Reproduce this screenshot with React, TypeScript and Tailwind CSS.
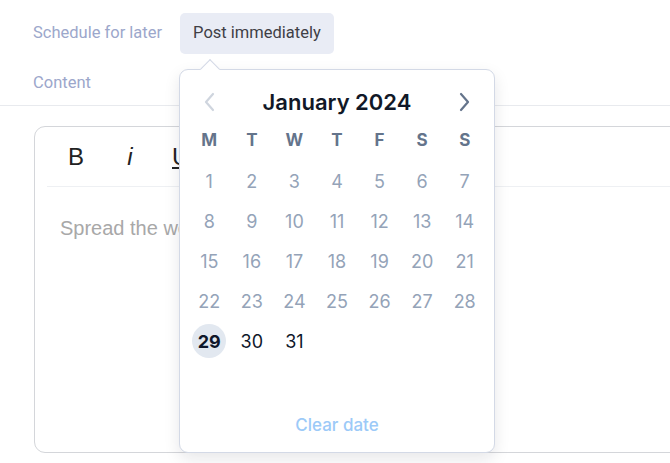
import React from "react";

const weeks: (number | null)[][] = [
  [1, 2, 3, 4, 5, 6, 7],
  [8, 9, 10, 11, 12, 13, 14],
  [15, 16, 17, 18, 19, 20, 21],
  [22, 23, 24, 25, 26, 27, 28],
  [29, 30, 31, null, null, null, null],
];

function Chevron({ dir, className }: { dir: "left" | "right"; className: string }) {
  return (
    <svg width="14" height="22" viewBox="0 0 14 22" fill="none" className={className}>
      {dir === "left" ? (
        <path d="M11 3 L4 11 L11 19" stroke="currentColor" strokeWidth="2.2" strokeLinecap="round" strokeLinejoin="round" />
      ) : (
        <path d="M3 3 L10 11 L3 19" stroke="currentColor" strokeWidth="2.2" strokeLinecap="round" strokeLinejoin="round" />
      )}
    </svg>
  );
}

export default function App() {
  return (
    <div className="relative w-[670px] h-[463px] overflow-hidden bg-white" style={{ fontFamily: "Roboto, 'Liberation Sans', sans-serif" }}>
      {/* Tabs */}
      <div className="flex items-center pt-[13px] pl-[33px] gap-[18px]">
        <span className="text-[16.5px] text-[#9ca7cb]">Schedule for later</span>
        <span className="h-[41px] px-[13px] flex items-center rounded-[5px] bg-[#e9ecf5] text-[16.5px] text-[#3f3f46]">Post immediately</span>
      </div>
      <div className="pl-[33px] mt-[17px] h-[35px] border-b border-[#e8eaee]">
        <span className="text-[16.5px] text-[#9ca7cb] leading-[24px]">Content</span>
      </div>

      {/* Editor */}
      <div className="ml-[34px] mt-[20px] w-[680px] h-[327px] border border-[#d4d6da] rounded-[11px]" style={{ fontFamily: "'Liberation Sans', Arial, sans-serif" }}>
        <div className="mx-[12px] h-[60px] flex items-center border-b border-[#eef0f3] pl-[21px] gap-[32px]">
          <span className="text-[24px] text-[#222] w-[20px]">B</span>
          <span className="text-[24px] text-[#222] italic w-[20px] text-center">i</span>
          <span className="text-[24px] text-[#222] underline w-[20px]">U</span>
        </div>
        <div className="pl-[25px] pt-[26px] text-[20px] text-[#a8a8a8]">Spread the word</div>
      </div>

      {/* Popover */}
      <div
        className="absolute left-[179px] top-[69px] w-[316px] h-[384px] bg-white border border-[#d3d9e6] rounded-[9px] shadow-[0_6px_16px_rgba(15,23,42,0.10)] flex flex-col px-2"
        style={{ fontFamily: "Inter, 'Liberation Sans', sans-serif" }}
      >
        <div className="absolute -top-[8px] left-[23px] w-[14px] h-[14px] rotate-45 bg-white border-l border-t border-[#d3d9e6]" />
        <div className="grid grid-cols-7 mt-4 h-8 items-center">
          <div className="flex justify-center">
            <Chevron dir="left" className="text-[#cfd5de]" />
          </div>
          <div className="col-span-5 text-center text-[22px] font-semibold text-[#111827] leading-8">January 2024</div>
          <div className="flex justify-center">
            <Chevron dir="right" className="text-[#64748b]" />
          </div>
        </div>
        <div className="grid grid-cols-7 mt-[3px] h-10 items-center">
          {["M", "T", "W", "T", "F", "S", "S"].map((d, i) => (
            <div key={i} className="text-center text-[17px] font-bold text-[#64748b]">{d}</div>
          ))}
        </div>
        {weeks.map((w, wi) => (
          <div key={wi} className="grid grid-cols-7 h-10 items-center">
            {w.map((d, di) =>
              d === null ? (
                <div key={di} />
              ) : (
                <div key={di} className="flex justify-center">
                  {d === 29 ? (
                    <span className="w-[34px] h-[34px] rounded-full bg-[#e2e8f0] flex items-center justify-center text-[18px] font-bold text-[#0f172a]">29</span>
                  ) : (
                    <span className={`text-[18px] ${d >= 30 ? "text-[#0f172a]" : "text-[#94a3b8]"}`}>{d}</span>
                  )}
                </div>
              )
            )}
          </div>
        ))}
        <div className="mt-auto pb-[15px] text-center text-[17px] leading-6 font-medium text-[#9ccaf8]">Clear date</div>
      </div>
    </div>
  );
}
